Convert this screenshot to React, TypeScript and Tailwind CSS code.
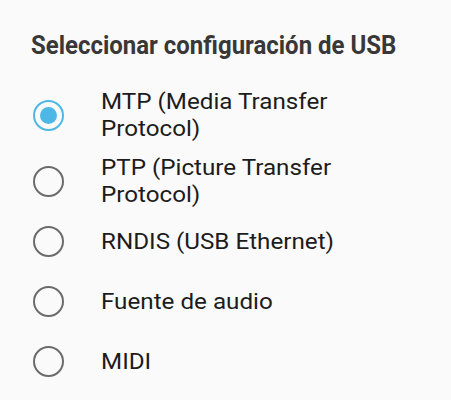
import React, { useState } from 'react';

const options = [
    { id: 'mtp', label: 'MTP (Media Transfer Protocol)', h: 'h-[72px]' },
    { id: 'ptp', label: 'PTP (Picture Transfer Protocol)', h: 'h-[60px]' },
    { id: 'rndis', label: 'RNDIS (USB Ethernet)', h: 'h-[60px]' },
    { id: 'audio', label: 'Fuente de audio', h: 'h-[60px]' },
    { id: 'midi', label: 'MIDI', h: 'h-[60px]' },
];

const Radio = ({ checked }: { checked: boolean }) =>
    checked ? (
        <span className="flex size-[31px] shrink-0 items-center justify-center rounded-full border-[2.5px] border-[#4db8e6]">
            <span className="size-[17px] rounded-full bg-[#4db8e6]" />
        </span>
    ) : (
        <span className="size-[31px] shrink-0 rounded-full border-[2.5px] border-[#6b6b6b]" />
    );

export default function App() {
    const [selected, setSelected] = useState('mtp');

    return (
        <div className="h-[400px] w-[451px] overflow-hidden bg-[#fafafa] font-['Roboto',sans-serif]">
            <h1 className="pt-[30px] pl-[31px] text-[26px] font-bold leading-[31px] text-[#383838]">
                <span className="inline-block origin-left scale-x-[0.922] whitespace-nowrap">
                    Seleccionar configuración de USB
                </span>
            </h1>
            <ul className="mt-[18px] flex flex-col">
                {options.map(o => (
                    <li
                        key={o.id}
                        onClick={() => setSelected(o.id)}
                        className={`flex ${o.h} cursor-pointer items-center pl-[33px]`}
                    >
                        <Radio checked={selected === o.id} />
                        <span className="ml-[37px] w-[230px] origin-left scale-x-110 text-[22px] leading-[27px] text-[#1c1c1c]">
                            {o.label}
                        </span>
                    </li>
                ))}
            </ul>
        </div>
    );
}
